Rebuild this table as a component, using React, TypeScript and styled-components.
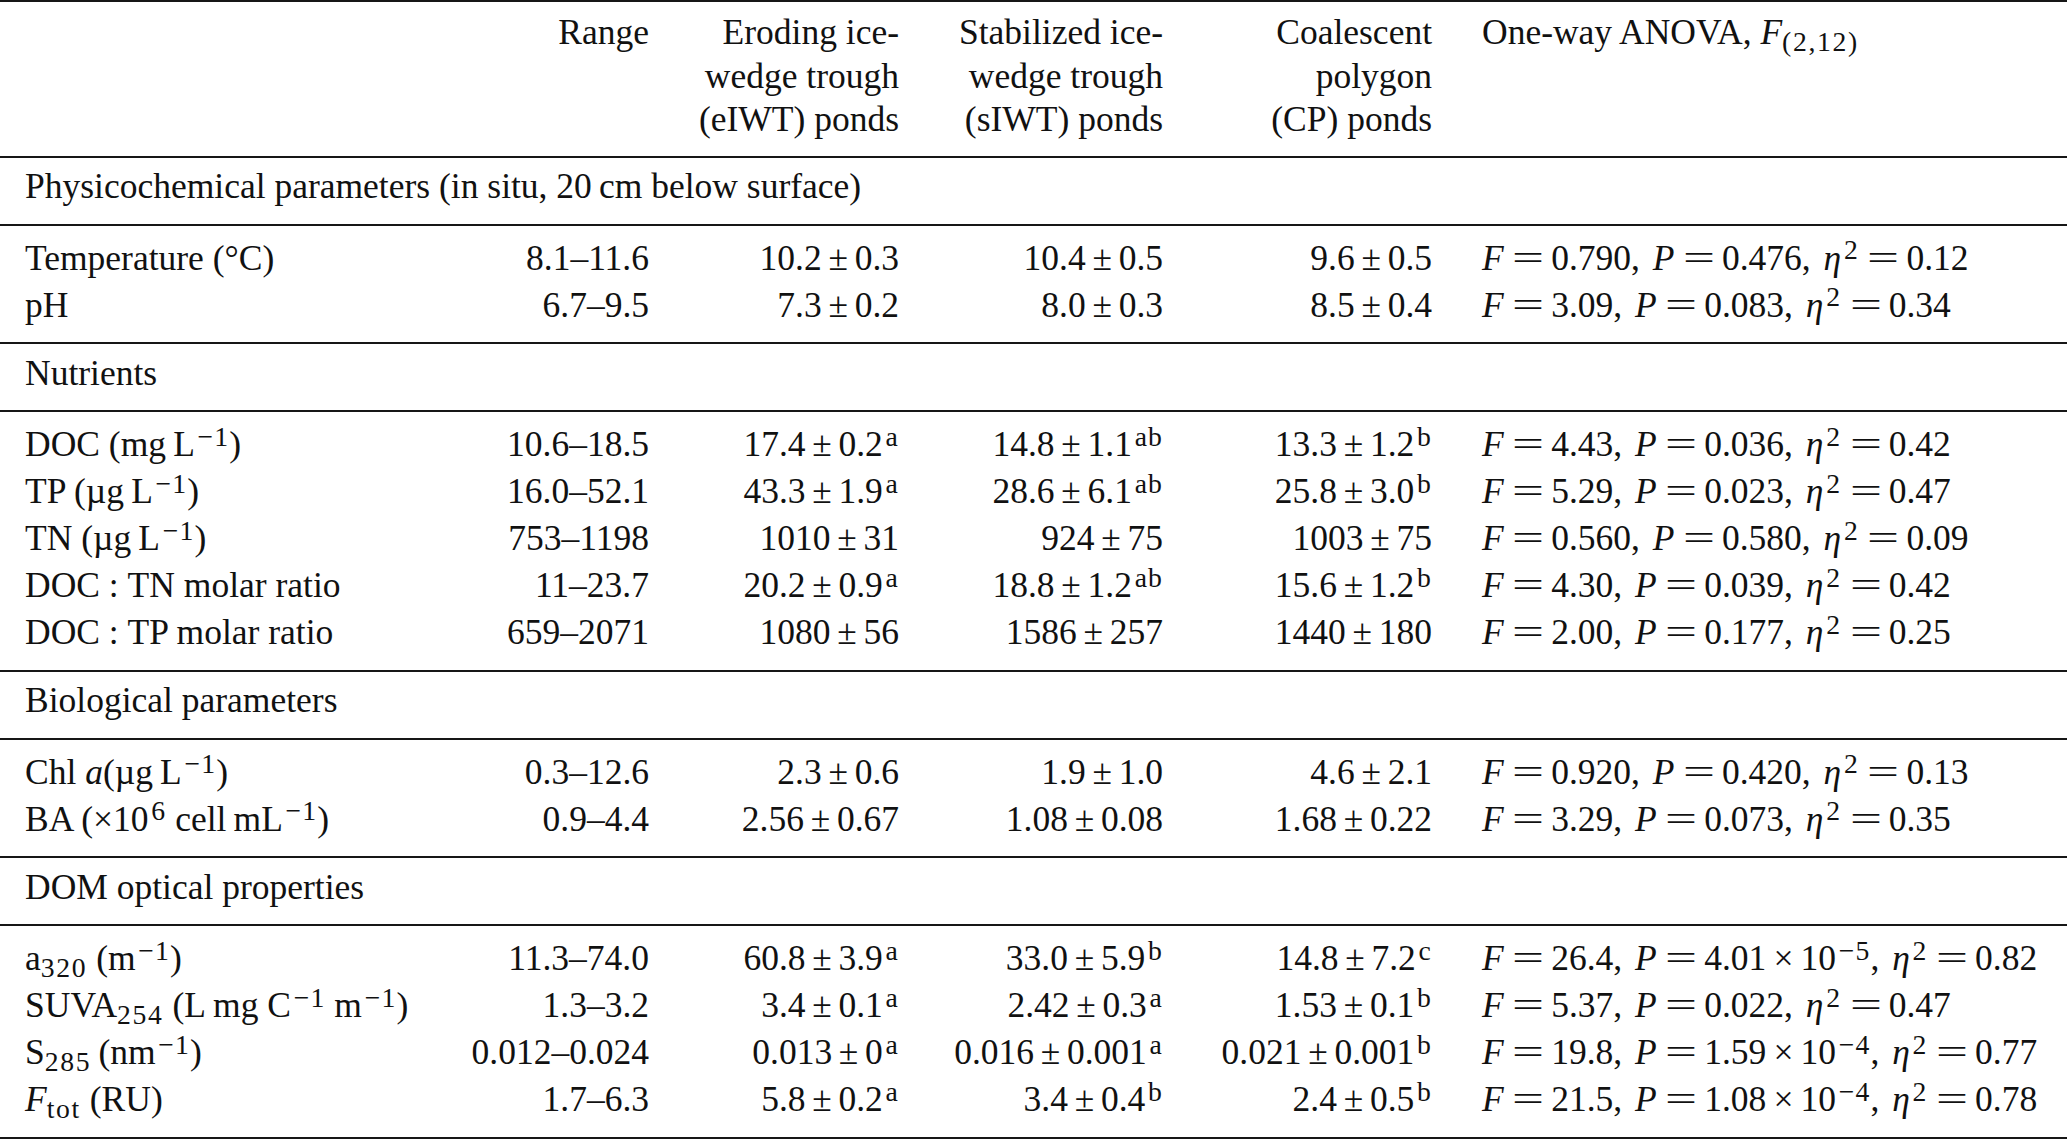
import React from "react";
import styled, { createGlobalStyle } from "styled-components";

const Global = createGlobalStyle`
  html, body { margin: 0; padding: 0; background: #ffffff; overflow: hidden; }
  body {
    font-family: "Liberation Serif", "Times New Roman", Times, serif;
    color: #111111;
  }
`;

const RULE = "2px solid #161616";

const Table = styled.table`
  width: 2067px;
  border-collapse: collapse;
  table-layout: fixed;
  font-size: 35.5px;
  border-top: ${RULE};
  border-bottom: ${RULE};
`;

const Head = styled.thead`
  border-bottom: ${RULE};
`;

const HeadCell = styled.th<{ $left?: boolean }>`
  font-weight: normal;
  line-height: 43.5px;
  vertical-align: top;
  white-space: nowrap;
  text-align: ${(p) => (p.$left ? "left" : "right")};
  padding: 9px 0 14px ${(p) => (p.$left ? "50px" : "0")};
`;

const Group = styled.tbody<{ $heading?: boolean }>`
  border-top: ${RULE};
  & > tr:first-child > td {
    padding-top: ${(p) => (p.$heading ? "5.5px" : "9px")};
  }
  & > tr:last-child > td {
    padding-bottom: 13.5px;
  }
`;

const Cell = styled.td`
  line-height: 47px;
  white-space: nowrap;
  padding: 0;
  vertical-align: baseline;
`;

const Label = styled(Cell)`
  text-align: left;
  padding-left: 25px;
`;

const Num = styled(Cell)`
  text-align: right;
`;

const Stat = styled(Cell)`
  text-align: left;
  padding-left: 50px;
`;

const Sup = styled.sup`
  font-size: 0.78em;
  line-height: 0;
  letter-spacing: 0.04em;
  vertical-align: 0.37em;
  margin-left: 0.1em;
`;

const Sub = styled.sub`
  font-size: 0.78em;
  line-height: 0;
  letter-spacing: 0.06em;
  vertical-align: -0.24em;
`;

const It = styled.i`
  font-style: italic;
`;

const Op = styled.span<{ $gap: number }>`
  padding: 0 ${(p) => p.$gap}em;
`;

const RelBox = styled.span`
  display: inline-block;
  width: 1.3em;
  padding-left: 0.04em;
  text-align: center;
`;

const WideGlyph = styled.span`
  display: inline-block;
  transform: scaleX(1.6);
`;

const Comma = styled.span`
  padding-right: 0.36em;
`;

const PM = () => <Op $gap={0.19}>±</Op>;
const EQ = () => (
  <RelBox>
    <WideGlyph>=</WideGlyph>
  </RelBox>
);
const TIMES = () => <Op $gap={0.2}>×</Op>;
const RATIO = () => <Op $gap={0.25}>:</Op>;

type Mean = { v: string; e: string; s?: string };
type Row = {
  label: React.ReactNode;
  range: string;
  means: Mean[];
  f: string;
  p: string;
  pExp?: string;
  eta: string;
};
type Section = { title: React.ReactNode; rows: Row[] };

const inv = <Sup>−1</Sup>;

const sections: Section[] = [
  {
    title: <>Physicochemical parameters (in situ, 20{"\u2009"}cm below surface)</>,
    rows: [
      {
        label: <>Temperature (°C)</>,
        range: "8.1–11.6",
        means: [{ v: "10.2", e: "0.3" }, { v: "10.4", e: "0.5" }, { v: "9.6", e: "0.5" }],
        f: "0.790", p: "0.476", eta: "0.12",
      },
      {
        label: <>pH</>,
        range: "6.7–9.5",
        means: [{ v: "7.3", e: "0.2" }, { v: "8.0", e: "0.3" }, { v: "8.5", e: "0.4" }],
        f: "3.09", p: "0.083", eta: "0.34",
      },
    ],
  },
  {
    title: <>Nutrients</>,
    rows: [
      {
        label: <>DOC (mg{"\u2009"}L{inv})</>,
        range: "10.6–18.5",
        means: [{ v: "17.4", e: "0.2", s: "a" }, { v: "14.8", e: "1.1", s: "ab" }, { v: "13.3", e: "1.2", s: "b" }],
        f: "4.43", p: "0.036", eta: "0.42",
      },
      {
        label: <>TP (µg{"\u2009"}L{inv})</>,
        range: "16.0–52.1",
        means: [{ v: "43.3", e: "1.9", s: "a" }, { v: "28.6", e: "6.1", s: "ab" }, { v: "25.8", e: "3.0", s: "b" }],
        f: "5.29", p: "0.023", eta: "0.47",
      },
      {
        label: <>TN (µg{"\u2009"}L{inv})</>,
        range: "753–1198",
        means: [{ v: "1010", e: "31" }, { v: "924", e: "75" }, { v: "1003", e: "75" }],
        f: "0.560", p: "0.580", eta: "0.09",
      },
      {
        label: <>DOC<RATIO />TN molar ratio</>,
        range: "11–23.7",
        means: [{ v: "20.2", e: "0.9", s: "a" }, { v: "18.8", e: "1.2", s: "ab" }, { v: "15.6", e: "1.2", s: "b" }],
        f: "4.30", p: "0.039", eta: "0.42",
      },
      {
        label: <>DOC<RATIO />TP molar ratio</>,
        range: "659–2071",
        means: [{ v: "1080", e: "56" }, { v: "1586", e: "257" }, { v: "1440", e: "180" }],
        f: "2.00", p: "0.177", eta: "0.25",
      },
    ],
  },
  {
    title: <>Biological parameters</>,
    rows: [
      {
        label: <>Chl <It>a</It>(µg{"\u2009"}L{inv})</>,
        range: "0.3–12.6",
        means: [{ v: "2.3", e: "0.6" }, { v: "1.9", e: "1.0" }, { v: "4.6", e: "2.1" }],
        f: "0.920", p: "0.420", eta: "0.13",
      },
      {
        label: <>BA (×10<Sup>6</Sup> cell{"\u2009"}mL{inv})</>,
        range: "0.9–4.4",
        means: [{ v: "2.56", e: "0.67" }, { v: "1.08", e: "0.08" }, { v: "1.68", e: "0.22" }],
        f: "3.29", p: "0.073", eta: "0.35",
      },
    ],
  },
  {
    title: <>DOM optical properties</>,
    rows: [
      {
        label: <>a<Sub>320</Sub> (m{inv})</>,
        range: "11.3–74.0",
        means: [{ v: "60.8", e: "3.9", s: "a" }, { v: "33.0", e: "5.9", s: "b" }, { v: "14.8", e: "7.2", s: "c" }],
        f: "26.4", p: "4.01", pExp: "−5", eta: "0.82",
      },
      {
        label: <>SUVA<Sub>254</Sub> (L{"\u2009"}mg C<Sup>−1</Sup> m{inv})</>,
        range: "1.3–3.2",
        means: [{ v: "3.4", e: "0.1", s: "a" }, { v: "2.42", e: "0.3", s: "a" }, { v: "1.53", e: "0.1", s: "b" }],
        f: "5.37", p: "0.022", eta: "0.47",
      },
      {
        label: <>S<Sub>285</Sub>{"\u2009"}(nm{inv})</>,
        range: "0.012–0.024",
        means: [{ v: "0.013", e: "0", s: "a" }, { v: "0.016", e: "0.001", s: "a" }, { v: "0.021", e: "0.001", s: "b" }],
        f: "19.8", p: "1.59", pExp: "−4", eta: "0.77",
      },
      {
        label: <><It>F</It><Sub>tot</Sub> (RU)</>,
        range: "1.7–6.3",
        means: [{ v: "5.8", e: "0.2", s: "a" }, { v: "3.4", e: "0.4", s: "b" }, { v: "2.4", e: "0.5", s: "b" }],
        f: "21.5", p: "1.08", pExp: "−4", eta: "0.78",
      },
    ],
  },
];

function MeanValue({ m }: { m: Mean }) {
  return (
    <>
      {m.v}
      <PM />
      {m.e}
      {m.s ? <Sup>{m.s}</Sup> : null}
    </>
  );
}

function Anova({ r }: { r: Row }) {
  return (
    <>
      <It>F</It>
      <EQ />
      {r.f}
      <Comma>,</Comma>
      <It>P</It>
      <EQ />
      {r.p}
      {r.pExp ? (
        <>
          <TIMES />10<Sup>{r.pExp}</Sup>
        </>
      ) : null}
      <Comma>,</Comma>
      <It>η</It>
      <Sup>2</Sup>
      <EQ />
      {r.eta}
    </>
  );
}

export default function App() {
  return (
    <>
      <Global />
      <Table>
        <colgroup>
          <col style={{ width: 440 }} />
          <col style={{ width: 209 }} />
          <col style={{ width: 250 }} />
          <col style={{ width: 264 }} />
          <col style={{ width: 269 }} />
          <col style={{ width: 635 }} />
        </colgroup>
        <Head>
          <tr>
            <HeadCell />
            <HeadCell>Range</HeadCell>
            <HeadCell>
              Eroding ice-
              <br />
              wedge trough
              <br />
              (eIWT) ponds
            </HeadCell>
            <HeadCell>
              Stabilized ice-
              <br />
              wedge trough
              <br />
              (sIWT) ponds
            </HeadCell>
            <HeadCell>
              Coalescent
              <br />
              polygon
              <br />
              (CP) ponds
            </HeadCell>
            <HeadCell $left>
              One-way ANOVA, <It>F</It>
              <Sub>(2,12)</Sub>
            </HeadCell>
          </tr>
        </Head>
        {sections.map((sec, i) => (
          <React.Fragment key={i}>
            <Group $heading>
              <tr>
                <Label colSpan={6}>{sec.title}</Label>
              </tr>
            </Group>
            <Group>
              {sec.rows.map((r, j) => (
                <tr key={j}>
                  <Label>{r.label}</Label>
                  <Num>{r.range}</Num>
                  {r.means.map((m, k) => (
                    <Num key={k}>
                      <MeanValue m={m} />
                    </Num>
                  ))}
                  <Stat>
                    <Anova r={r} />
                  </Stat>
                </tr>
              ))}
            </Group>
          </React.Fragment>
        ))}
      </Table>
    </>
  );
}
